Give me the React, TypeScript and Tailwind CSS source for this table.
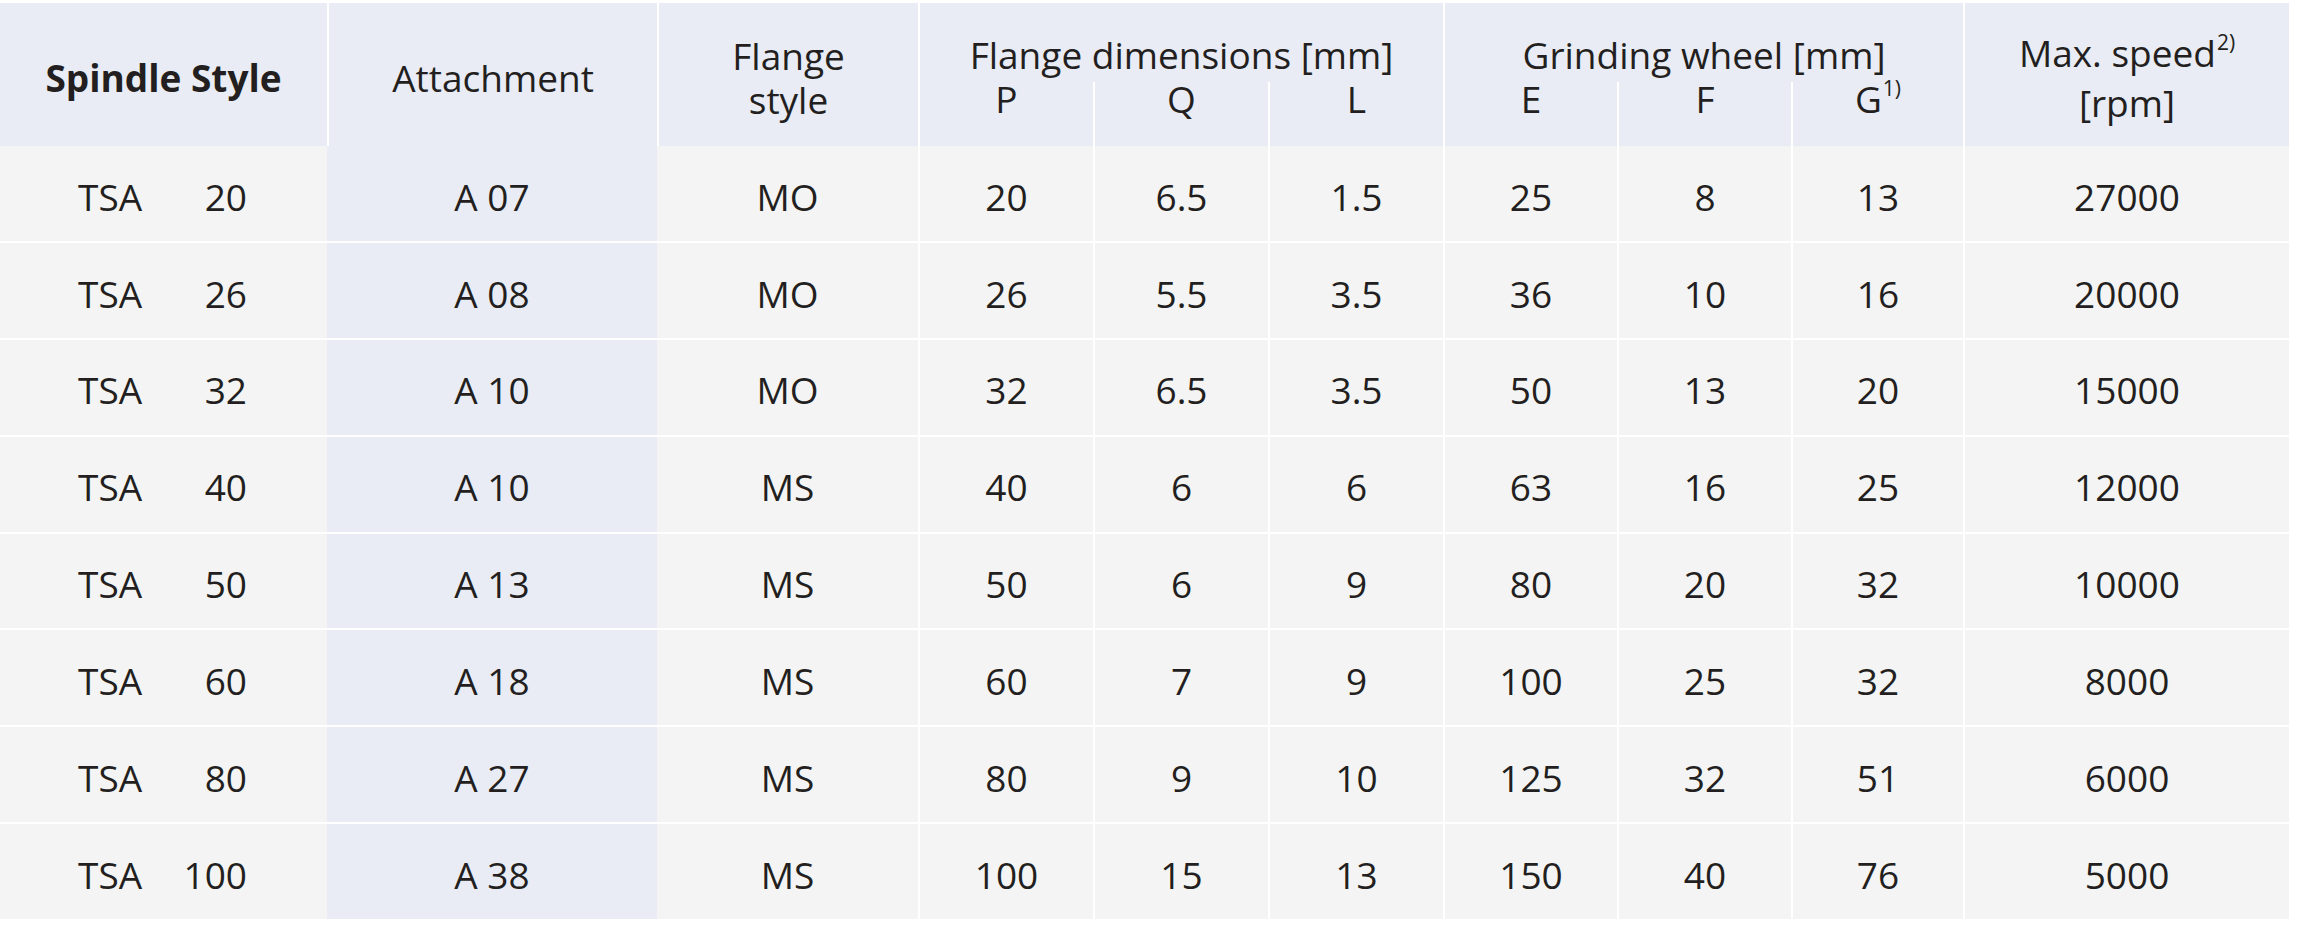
import React from "react";

const rows = [
  ["20", "A 07", "MO", "20", "6.5", "1.5", "25", "8", "13", "27000"],
  ["26", "A 08", "MO", "26", "5.5", "3.5", "36", "10", "16", "20000"],
  ["32", "A 10", "MO", "32", "6.5", "3.5", "50", "13", "20", "15000"],
  ["40", "A 10", "MS", "40", "6", "6", "63", "16", "25", "12000"],
  ["50", "A 13", "MS", "50", "6", "9", "80", "20", "32", "10000"],
  ["60", "A 18", "MS", "60", "7", "9", "100", "25", "32", "8000"],
  ["80", "A 27", "MS", "80", "9", "10", "125", "32", "51", "6000"],
  ["100", "A 38", "MS", "100", "15", "13", "150", "40", "76", "5000"],
];

const cols = "grid grid-cols-[327px_330px_261px_175px_175px_175px_174px_174px_172px_326px]";
const cell = "flex items-center justify-center pt-[6px]";
const line = "border-l-2 border-white";

function Sup({ children }: { children: React.ReactNode }) {
  return <span className="relative -top-[17px] ml-[1px] text-[21px]">{children}</span>;
}

export default function App() {
  return (
    <div className="w-[2300px] h-[925px] bg-white pt-[3px] font-['Open_Sans',sans-serif] text-[37px] text-[#231f20]">
      <div className="w-[2289px]">
        {/* header */}
        <div className={`${cols} h-[143px] bg-[#e9ecf5]`}>
          <div className={`${cell} font-bold`}>Spindle Style</div>
          <div className={`${cell} ${line}`}>Attachment</div>
          <div className={`${line} flex items-center justify-center pt-[6px] text-center leading-[44px]`}>
            Flange
            <br />
            style
          </div>
          <div className={`col-span-3 ${line} flex flex-col`}>
            <div className="h-[79px] pt-[30px] text-center leading-[44px]">Flange dimensions [mm]</div>
            <div className="grid flex-1 grid-cols-[173px_175px_175px] leading-[34px]">
              <div className="text-center">P</div>
              <div className={`${line} text-center`}>Q</div>
              <div className={`${line} text-center`}>L</div>
            </div>
          </div>
          <div className={`col-span-3 ${line} flex flex-col`}>
            <div className="h-[79px] pt-[30px] text-center leading-[44px]">Grinding wheel [mm]</div>
            <div className="grid flex-1 grid-cols-[172px_174px_172px] leading-[34px]">
              <div className="text-center">E</div>
              <div className={`${line} text-center`}>F</div>
              <div className={`${line} text-center`}>
                G<Sup>1)</Sup>
              </div>
            </div>
          </div>
          <div className={`${line} flex items-center justify-center pt-[6px] text-center leading-[44px]`}>
            <div>
              Max. speed<Sup>2)</Sup>
              <br />
              [rpm]
            </div>
          </div>
        </div>

        {/* body */}
        <div className="flex flex-col gap-[2px] bg-white">
          {rows.map((r, i) => (
            <div key={i} className={`${cols} h-[94.9px] bg-[#f4f4f4]`}>
              <div className="flex items-center pt-[6px] pl-[78px]">
                <span className="w-[66px]">TSA</span>
                <span className="w-[103px] text-right">{r[0]}</span>
              </div>
              <div className={`${cell} bg-[#e9ecf5]`}>{r[1]}</div>
              <div className={cell}>{r[2]}</div>
              {r.slice(3).map((v, j) => (
                <div key={j} className={`${cell} ${line}`}>
                  {v}
                </div>
              ))}
            </div>
          ))}
        </div>
      </div>
    </div>
  );
}
